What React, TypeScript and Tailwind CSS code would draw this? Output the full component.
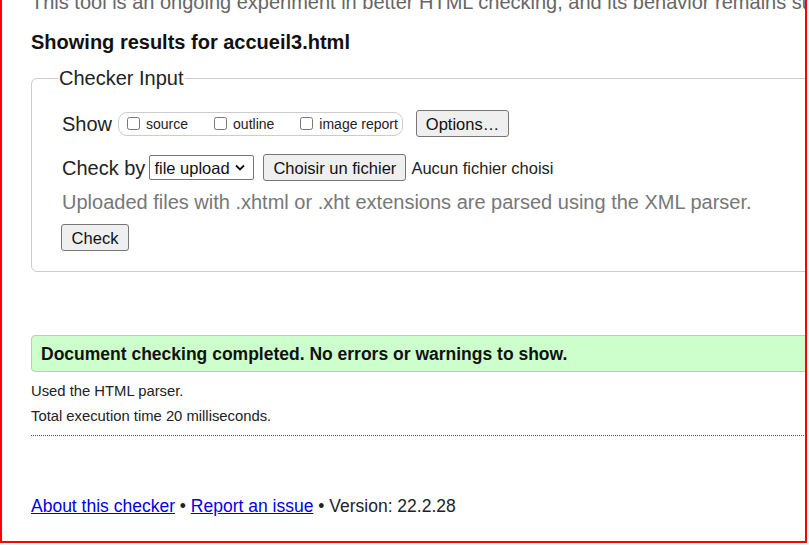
import React from "react";

function Checkbox({ label, className = "" }: { label: string; className?: string }) {
  return (
    <label className={"flex items-center " + className}>
      <input type="checkbox" className="m-0 h-[13px] w-[13px]" />
      <span className="ml-[6px] text-[14px] leading-[16px]">{label}</span>
    </label>
  );
}

function Button({ children, className = "" }: { children: React.ReactNode; className?: string }) {
  return (
    <button
      type="button"
      className={
        "h-[27px] rounded-[3px] border border-[#767676] bg-[#efefef] text-[16.5px] leading-[20px] text-[#111] " +
        className
      }
    >
      {children}
    </button>
  );
}

export default function App() {
  return (
    <div className="h-[545px] w-[809px] bg-white">
      <div className="h-[543px] w-[807px] overflow-hidden border-x-2 border-b-2 border-[#ff0000] bg-white font-['Liberation_Sans',Arial,sans-serif] text-[#222]">
        <div className="w-[1000px] pl-[29px]">
          <p className="-mt-[10px] whitespace-nowrap text-[20px] leading-[24px] text-[#666]">
            This tool is an ongoing experiment in better HTML checking, and its behavior remains subject to change
          </p>

          <h2 className="mt-[16px] text-[20px] font-bold leading-[24px] text-[#111]">
            Showing results for accueil3.html
          </h2>

          <fieldset className="mt-[12px] rounded-[6px] border border-[#ccc] pb-[20px] pl-[30px]">
            <legend className="-ml-[4px] px-[1px] text-[20px] leading-[24px]">Checker Input</legend>

            <div className="mt-[20px] flex h-[27px] items-center">
              <span className="text-[20px] leading-[24px]">Show</span>
              <div className="ml-[6px] flex h-[24px] w-[285px] items-center rounded-[9px] border border-[#ccc] pl-[8px]">
                <Checkbox label="source" />
                <Checkbox label="outline" className="ml-[26px]" />
                <Checkbox label="image report" className="ml-[26px]" />
              </div>
              <Button className="ml-[13px] w-[93px]">Options…</Button>
            </div>

            <div className="mt-[17px] flex h-[27px] items-center">
              <span className="text-[20px] leading-[24px]">Check by</span>
              <div className="ml-[4px] flex h-[25px] w-[105px] items-center rounded-[2px] border border-[#767676] pl-[4px] text-[16.5px] leading-[20px] text-[#111]">
                <span>file upload</span>
                <svg className="ml-[5px]" width="10" height="7" viewBox="0 0 10 7" fill="none">
                  <path d="M1 1.5 L5 5.5 L9 1.5" stroke="#111" strokeWidth="1.8" />
                </svg>
              </div>
              <Button className="ml-[9px] w-[143px]">Choisir un fichier</Button>
              <span className="ml-[5px] text-[16.5px] leading-[20px]">Aucun fichier choisi</span>
            </div>

            <p className="mt-[9px] text-[20px] leading-[24px] text-[#777]">
              Uploaded files with .xhtml or .xht extensions are parsed using the XML parser.
            </p>

            <Button className="-ml-[1px] mt-[10px] block w-[68px]">Check</Button>
          </fieldset>

          <div className="mt-[63px] flex h-[37px] items-center rounded-[4px] border border-[#c4c4c4] bg-[#ccffcc] pl-[9px]">
            <span className="text-[17.5px] font-bold leading-[22px] text-[#111]">
              Document checking completed. No errors or warnings to show.
            </span>
          </div>

          <p className="mt-[10px] text-[14.8px] leading-[18px]">Used the HTML parser.</p>
          <p className="mt-[7px] text-[14.8px] leading-[18px]">Total execution time 20 milliseconds.</p>

          <div className="mt-[10px] border-t border-dotted border-[#555]" />

          <p className="mt-[59px] text-[17.5px] leading-[22px]">
            <a href="#" className="text-[#0000ee] underline">About this checker</a>
            {" • "}
            <a href="#" className="text-[#0000ee] underline">Report an issue</a>
            {" • Version: 22.2.28"}
          </p>
        </div>
      </div>
    </div>
  );
}
